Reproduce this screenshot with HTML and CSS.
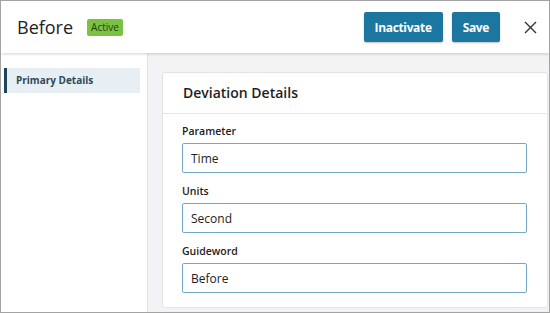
FILE: index.html
```html
<!DOCTYPE html>
<html lang="en">
    <head>
        <meta charset="UTF-8" />
        <meta name="viewport" content="width=device-width, initial-scale=1.0" />
        <title>Before - Deviation</title>

        <link rel="stylesheet" href="styles.css">
    </head>
    <body>
        <div class="frame">
            <div class="top_bar">
                <div class="title_wrap">
                    <h1>Before</h1>
                    <span class="badge">Active</span>
                </div>
                <div class="actions">
                    <button class="btn">Inactivate</button>
                    <button class="btn">Save</button>
                    <button class="close_btn" aria-label="Close">
                        <svg width="13" height="13" viewBox="0 0 13 13">
                            <path d="M1 1 L12 12 M12 1 L1 12" stroke="#333" stroke-width="1.4" fill="none" />
                        </svg>
                    </button>
                </div>
            </div>
            <div class="content">
                <div class="sidebar">
                    <div class="side_item">Primary Details</div>
                </div>
                <div class="main">
                    <div class="card">
                        <div class="card_head">Deviation Details</div>
                        <div class="card_body">
                            <div class="field">
                                <label for="parameter">Parameter</label>
                                <input type="text" id="parameter" value="Time" />
                            </div>
                            <div class="field">
                                <label for="units">Units</label>
                                <input type="text" id="units" value="Second" />
                            </div>
                            <div class="field">
                                <label for="guideword">Guideword</label>
                                <input type="text" id="guideword" value="Before" />
                            </div>
                        </div>
                    </div>
                </div>
            </div>
        </div>
    </body>
</html>
```

FILE: styles.css
```css
body {
    margin: 0;
    font-family: "Open Sans", "Noto Sans", sans-serif;
    color: #222;
    background: #fff;
}

.frame {
    width: 550px;
    height: 313px;
    box-sizing: border-box;
    border: 1px solid #a3a3a3;
    display: flex;
    flex-direction: column;
    overflow: hidden;
}

.top_bar {
    height: 52px;
    flex-shrink: 0;
    display: flex;
    align-items: center;
    justify-content: space-between;
    padding: 0 12px 0 16px;
    background: #fff;
    box-shadow: 0 1px 3px rgba(0, 0, 0, 0.18);
    position: relative;
    z-index: 1;
}

.title_wrap {
    display: flex;
    align-items: center;
    gap: 14px;
}

h1 {
    margin: 0;
    font-size: 18px;
    font-weight: 400;
    color: #222;
}

.badge {
    background: #7cc242;
    color: #24400e;
    font-size: 10px;
    line-height: 17px;
    padding: 0 4px;
    border-radius: 2px;
}

.actions {
    display: flex;
    align-items: center;
    gap: 9px;
}

.btn {
    height: 30px;
    padding: 0 11px;
    font-family: inherit;
    font-size: 12px;
    font-weight: 700;
    letter-spacing: -0.35px;
    color: #fff;
    background: #1b77a0;
    border: none;
    border-radius: 2px;
    box-shadow: 0 1px 2px rgba(0, 0, 0, 0.25);
    cursor: pointer;
}

.close_btn {
    background: none;
    border: none;
    padding: 0;
    margin-left: 15px;
    width: 13px;
    height: 13px;
    display: flex;
    align-items: center;
    justify-content: center;
    cursor: pointer;
}

.content {
    flex: 1;
    display: flex;
    min-height: 0;
}

.sidebar {
    width: 147px;
    flex-shrink: 0;
    border-right: 1px solid #e3e3e3;
    padding: 15px 7px 0 3px;
    box-sizing: border-box;
    background: #fff;
}

.side_item {
    height: 25px;
    line-height: 25px;
    padding-left: 9px;
    background: #e7eff4;
    border-left: 3px solid #1d4557;
    font-size: 10px;
    font-weight: 700;
    color: #2b4a5b;
}

.main {
    flex: 1;
    background: #f3f3f5;
    padding: 19px 1px 0 14px;
}

.card {
    background: #fff;
    border: 1px solid #e4e4e6;
    border-radius: 3px;
}

.card_head {
    height: 40px;
    line-height: 40px;
    padding-left: 20px;
    font-size: 14px;
    font-weight: 600;
    color: #1e1e1e;
    border-bottom: 1px solid #e6e6e8;
}

.card_body {
    display: flex;
    flex-direction: column;
    gap: 10px;
    padding: 9px 20px 14px 19px;
}

.field {
    display: flex;
    flex-direction: column;
}

label {
    font-size: 10.5px;
    font-weight: 600;
    line-height: 16px;
    margin-bottom: 4px;
    color: #222;
}

input {
    height: 30px;
    box-sizing: border-box;
    padding: 0 8px;
    font-family: inherit;
    font-size: 12px;
    color: #222;
    border: 1px solid #73a9c3;
    border-radius: 2px;
    outline: none;
}
```
